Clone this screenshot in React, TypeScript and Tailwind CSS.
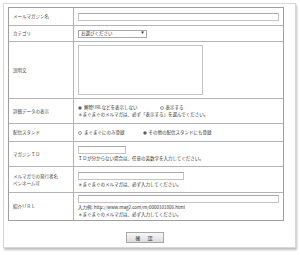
import React from "react";

const font = { fontFamily: '"Noto Sans CJK JP", "Noto Sans", sans-serif' };

function Row({
  label,
  h,
  children,
}: {
  label: React.ReactNode;
  h: string;
  children: React.ReactNode;
}) {
  return (
    <>
      <div className={`bg-white flex items-center pl-[4px] text-[4.5px] leading-[7px] text-[#444] ${h}`}>
        {label}
      </div>
      <div className={`bg-white flex flex-col justify-center pl-[4px] pr-[4px] text-[4.5px] leading-[7px] text-[#333] ${h}`}>
        {children}
      </div>
    </>
  );
}

function Input({ w }: { w: string }) {
  return <div className={`h-[8px] border border-[#c4c4c4] border-t-[#a8a8a8] bg-white ${w}`} />;
}

function Radio({ on, label }: { on?: boolean; label: string }) {
  return (
    <span className="inline-flex items-center gap-[2px]">
      <span className="w-[4px] h-[4px] rounded-full border border-[#999] bg-white flex items-center justify-center">
        {on && <span className="w-[2px] h-[2px] rounded-full bg-[#333]" />}
      </span>
      {label}
    </span>
  );
}

export default function App() {
  return (
    <div className="w-[300px] h-[255px] bg-white pt-[3px] pl-[3px]" style={font}>
      <div className="w-[293px] h-[245px] border border-[#d8d8d8] bg-white shadow-[1px_2px_2px_rgba(0,0,0,0.25)] pt-[3px] pl-[4px]">
        <div className="w-[276px] grid grid-cols-[64px_1fr] gap-[1px] bg-[#b4b4b4] border border-[#a0a0a0]">
          <Row label="メールマガジン名" h="h-[17px]">
            <Input w="w-[201px]" />
          </Row>
          <Row label="カテゴリ" h="h-[15px]">
            <div className="w-[69px] h-[8px] border border-[#a8a8a8] bg-white flex items-center justify-between px-[2px] text-[4.5px]">
              <span>お選びください</span>
              <span className="text-[3px]">▼</span>
            </div>
          </Row>
          <Row label="説明文" h="h-[56px]">
            <div className="w-[125px] h-[50px] border border-[#c4c4c4] bg-white" />
          </Row>
          <Row label="詳細データの表示" h="h-[24px]">
            <div className="flex gap-[22px]">
              <Radio on label="解除URLなどを表示しない" />
              <Radio label="表示する" />
            </div>
            <div>＊まぐまぐのメルマガは、必ず「表示する」を選んでください。</div>
          </Row>
          <Row label="配信スタンド" h="h-[17px]">
            <div className="flex gap-[18px]">
              <Radio label="まぐまぐにのみ登録" />
              <Radio on label="その他の配信スタンドにも登録" />
            </div>
          </Row>
          <Row label="マガジンＩＤ" h="h-[24px]">
            <Input w="w-[48px]" />
            <div className="mt-[1px]">ＩＤが分からない場合は、任意の英数字を入力してください。</div>
          </Row>
          <Row
            label={
              <div>
                <div>メルマガでの発行者名</div>
                <div>ペンネーム可</div>
              </div>
            }
            h="h-[25px]"
          >
            <Input w="w-[106px]" />
            <div className="mt-[1px]">＊まぐまぐのメルマガは、必ず入力してください。</div>
          </Row>
          <Row label="紹介ＵＲＬ" h="h-[27px]">
            <Input w="w-[201px]" />
            <div className="mt-[1px]">入力例: http://www.mag2.com/m/0000101806.html</div>
            <div>＊まぐまぐのメルマガは、必ず入力してください。</div>
          </Row>
        </div>
        <div className="flex justify-center mt-[11px] pr-[14px]">
          <div className="w-[38px] h-[11px] border border-[#a8a8a8] bg-gradient-to-b from-[#f8f8f8] to-[#dcdcdc] flex items-center justify-center text-[5px] text-[#222] tracking-[1px]">
            確　認
          </div>
        </div>
      </div>
    </div>
  );
}
